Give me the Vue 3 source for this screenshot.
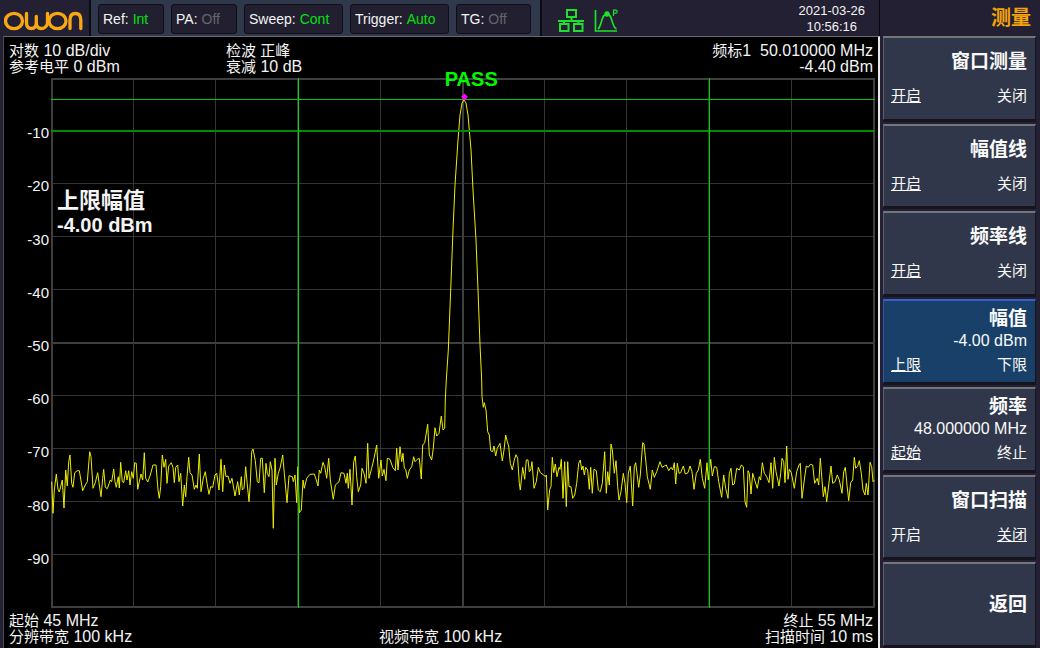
<script setup>
const status = [
  { label: 'Ref:', value: 'Int', on: true, size: 'short' },
  { label: 'PA:', value: 'Off', on: false, size: 'short' },
  { label: 'Sweep:', value: 'Cont', on: true, size: 'long' },
  { label: 'Trigger:', value: 'Auto', on: true, size: 'long' },
  { label: 'TG:', value: 'Off', on: false, size: 'medium' },
]

const menu = [
  { title: '窗口测量', options: ['开启', '关闭'], selected: 0 },
  { title: '幅值线', options: ['开启', '关闭'], selected: 0 },
  { title: '频率线', options: ['开启', '关闭'], selected: 0 },
  { title: '幅值', value: '-4.00 dBm', options: ['上限', '下限'], selected: 0, active: true },
  { title: '频率', value: '48.000000 MHz', options: ['起始', '终止'], selected: 0 },
  { title: '窗口扫描', options: ['开启', '关闭'], selected: 1 },
  { title: '返回' },
]

const levels = [-10, -20, -30, -40, -50, -60, -70, -80, -90]
const columns = [134, 216, 298, 381, 545, 627, 709, 792]
const rows = [131, 184, 237, 290, 396, 449, 502, 555]

// Sweep samples, stored in blocks relative to an origin at three steps per unit.
const sweep = [
  { x: 0, y: 430, data: '155,155 159,250 163,180 169,132 174,178 178,186 187,150 192,234 197,120 202,168 206,95 210,75 215,160 219,172 224,128 232,122 238,122 248,182 256,165 262,155 269,65 273,80 279,175 286,158 293,128 298,165 303,200 308,145 311,118 316,172 322,176 331,150 335,155 341,117 345,155 349,172 355,140 358,174 362,97 367,155 371,158 377,122 381,150 386,122 390,165 395,125 400,145 404,98 409,100 413,178 418,155 423,132 428,150 433,68 437,145 443,156 450,138 459,105 468,105 474,180 478,205 482,170 487,75 492,112 497,88 501,160 506,108 514,98 519,112 523,158 527,112 533,105 537,155 542,130 548,228 553,165 557,200 561,140 566,82 570,128 576,135 583,178 588,165 592,175 598,72 603,185 610,145 616,125 622,165 627,193 632,170 638,172 645,135 650,130 657,180 663,88 668,185 673,105 678,140 684,138 690,160' },
  { x: 230, y: 430, data: '6,145 15,198 23,155 28,195 34,140 37,180 42,175 47,110 52,165 57,215 61,160 65,65 69,57 76,92 82,155 87,158 92,85 97,85 103,188 108,100 112,130 117,140 121,95 126,120 130,295 135,85 139,165 145,130 150,115 158,75 163,130 171,218 177,137 187,140 190,155 195,135 200,218 204,110 208,248 214,240 219,150 223,175 230,145 240,133 253,132 259,150 264,168 268,120 272,130 279,97 284,110 290,145 296,85 301,150 310,208 316,165 327,155 333,128 342,130 348,160 352,130 355,175 360,118 366,225 371,95 376,78 380,140 385,185 392,165 396,115 402,130 408,160 413,40 417,145 425,115 432,85 440,45 446,145 453,90 457,138 462,118 468,152 472,85 480,88 488,112 496,122 500,55 504,120' },
  { x: 400, y: 380, data: '0,200 5,245 9,220 13,265 17,268 22,295 28,270 35,260 41,230 45,245 52,238 58,235 64,297 68,195 74,188 83,133 88,225 95,240 100,205 105,143 110,168 117,160 124,108 129,150 134,145 136,60 139,0 145,-90 152,-270 159,-450 165,-585 174,-720 180,-795 186,-831 192,-840 198,-831 204,-795 213,-690 219,-570 228,-420 234,-270 240,-105 245,0 246,50 250,82 253,68 258,90 263,155 268,165 272,212 278,215 282,198 287,228 292,205 300,190 307,243 312,210 317,165 322,185 326,198 331,250 337,270 343,240 348,224 353,235 358,310 361,330 368,262 374,298 379,240 384,240 388,275 392,270 396,245 402,325 409,305 415,262 421,278 431,285 436,290 439,285 443,390 449,328 453,320 457,232 461,278 466,252 471,290 477,262 480,268 484,238 489,355 494,245 499,380 503,245 507,320 513,320 518,355 524,345 530,310 536,250 541,240 545,270 549,258 553,285 557,262 563,270 568,328 572,262 577,340 582,268 589,272 595,330' },
  { x: 560, y: 430, data: '121,185 127,160 134,65 139,190 143,125 148,165 153,42 157,60 163,130 168,92 173,170 177,210 183,185 190,130 195,160 200,218 205,130 211,108 218,228 223,110 227,98 236,172 241,135 248,38 252,42 257,90 262,140 271,178 277,120 283,142 290,125 300,95 306,112 313,108 319,105 326,122 333,112 338,120 343,98 347,162 352,100 357,130 362,128 370,108 376,132 384,128 390,108 396,125 402,178 409,130 415,120 421,88 427,145 434,175 441,98 445,150 452,88 457,138 463,110 470,112 476,155 485,202 491,135 497,175 504,205' },
  { x: 700, y: 430, data: '88,130 93,115 98,165 103,162 110,115 118,120 124,105 130,110 135,215 140,232 144,122 148,130 153,192 158,130 164,150 172,175 178,140 182,150 187,98 193,130 200,140 207,158 213,98 218,175 223,82 228,125 237,168 242,130 246,85 251,95 255,158 260,48 264,148 268,118 274,128 283,175 290,125 297,105 301,100 306,205 313,150 319,108 325,112 331,103 338,105 344,160 352,145 356,165 361,85 366,150 370,200 375,170 380,215 386,165 393,108 398,160 405,155 412,135 418,150 426,190 431,125 436,112 441,165 446,212 452,158 458,150 463,82 467,115 473,108 478,92 484,130 489,180 495,195 499,160 504,195 510,97 515,110 519,155 523,150' },
]

const trace = sweep
  .flatMap(({ x, y, data }) =>
    data.split(' ').map((pair) => {
      const [px, py] = pair.split(',').map(Number)
      return `${(x + px / 3).toFixed(1)},${(y + py / 3).toFixed(1)}`
    })
  )
  .join(' ')
</script>

<template>
  <div class="analyzer">
    <header class="topbar">
      <div class="brand">
        <svg width="82" height="22" viewBox="0 0 82 22" role="img" aria-label="owon">
          <g fill="none" stroke="#f9a814" stroke-width="3.300" stroke-linecap="round" stroke-linejoin="round">
            <ellipse cx="10" cy="12" rx="8.500" ry="7.700" />
            <path d="M22.500 4.500v9c0 3.800 1.800 6 4.800 6s5-2.200 5-6v-6v6c0 3.800 2 6 5 6s5.200-2 6.200-5" />
            <path d="M43.500 14V4.500" />
            <ellipse cx="53.500" cy="12" rx="8.500" ry="7.700" />
            <path d="M66 19.500v-8.500c0-4 2-6.500 5.500-6.500s5.300 2.500 5.300 6.500v8.500" />
          </g>
        </svg>
      </div>
      <div class="status">
        <div v-for="s in status" :key="s.label" class="chip" :class="s.size">
          <span>{{ s.label }}</span><span :class="s.on ? 'on' : 'off'">{{ s.value }}</span>
        </div>
      </div>
      <div class="system">
        <svg width="26" height="24" viewBox="0 0 26 24" aria-hidden="true">
          <g fill="none" stroke="#1fe02c" stroke-width="2">
            <path d="M9 1h9v7H9zM2 15h8.500v7H2zM16 15h8.500v7H16zM13.500 8v4M0 12h26M6 12v3M20.500 12v3" />
          </g>
        </svg>
        <svg width="24" height="24" viewBox="0 0 24 24" aria-hidden="true">
          <g fill="none" stroke="#1fe02c" stroke-width="1.700">
            <path d="M1.500 1v21H23M4 20c4-3 3-15 9-15S17 17.500 22.500 20" />
            <path d="M19.500 7V1.200h2.200c2 0 2 3 0 3h-2.200" stroke-width="1.200" />
          </g>
          <circle cx="13" cy="5" r="2.700" fill="#1fe02c" />
        </svg>
        <time class="clock" datetime="2021-03-26T10:56:16">2021-03-26<br />10:56:16</time>
      </div>
      <h1 class="heading">测量</h1>
    </header>

    <main class="screen">
      <div class="info top">
        <p><span class="zh">对数</span> 10 dB/div<br /><span class="zh">参考电平</span> 0 dBm</p>
        <p><span class="zh">检波 正峰</span><br /><span class="zh">衰减</span> 10 dB</p>
        <p class="end"><span class="zh">频标</span>1&nbsp; 50.010000 MHz<br />-4.40 dBm</p>
      </div>
      <div class="chart">
        <div class="scale">
          <span v-for="l in levels" :key="l">{{ l }}</span>
        </div>
        <div class="plot">
          <svg class="graph" viewBox="51 78 824 530" preserveAspectRatio="none" aria-hidden="true">
            <g stroke="#343434" stroke-width="1">
              <line v-for="c in columns" :key="'c' + c" :x1="c - 0.5" :x2="c - 0.5" y1="79" y2="607" />
              <line v-for="r in rows" :key="'r' + r" x1="52" x2="874" :y1="r - 0.5" :y2="r - 0.5" />
            </g>
            <g fill="none" stroke="#3e4040" stroke-width="2">
              <rect x="52" y="79" width="822" height="528" />
              <path d="M463 79V607M52 343H874" />
            </g>
            <polyline :points="trace" fill="none" stroke="#eeee00" stroke-width="1" stroke-linejoin="round" />
            <g>
              <rect x="51" y="99" width="824" height="1" fill="#00c800" />
              <rect x="51" y="130" width="824" height="2" fill="#008c00" />
              <rect x="298" y="78" width="1" height="530" fill="#00e000" />
              <rect x="709" y="78" width="1" height="530" fill="#00d000" />
            </g>
            <path d="M464.500 93.500l3.500 3.500-3.500 3.500-3.500-3.500z" fill="#ff00ff" />
          </svg>
          <strong class="pass">PASS</strong>
          <p class="limit"><span>上限幅值</span><br />-4.00 dBm</p>
        </div>
      </div>
      <div class="info bottom">
        <p><span class="zh">起始</span> 45 MHz<br /><span class="zh">分辨带宽</span> 100 kHz</p>
        <p><br /><span class="zh">视频带宽</span> 100 kHz</p>
        <p class="end"><span class="zh">终止</span> 55 MHz<br /><span class="zh">扫描时间</span> 10 ms</p>
      </div>
    </main>

    <nav class="menu">
      <button v-for="m in menu" :key="m.title" type="button" class="key" :class="{ active: m.active, detailed: m.value, single: !m.options }">
        <span class="title">{{ m.title }}</span>
        <span v-if="m.value" class="value">{{ m.value }}</span>
        <span v-if="m.options" class="options">
          <span v-for="(o, i) in m.options" :key="o" :class="{ chosen: i === m.selected }">{{ o }}</span>
        </span>
      </button>
    </nav>
  </div>
</template>

<style>
body {
  margin: 0;
  background: #232033;
}
</style>

<style scoped>
.analyzer {
  box-sizing: border-box;
  min-height: 100vh;
  display: grid;
  grid-template-columns: minmax(0, 1fr) 160px;
  grid-template-rows: 36px 1fr;
  background: #232033;
  color: #f4f4f4;
  font-family: "Liberation Sans", "Noto Sans CJK SC", sans-serif;
  font-size: 16px;
}

p,
h1 {
  margin: 0;
}

.topbar {
  grid-column: 1 / -1;
  display: grid;
  grid-template-columns: 89px 451px minmax(0, 1fr) 160px;
}

.brand {
  display: flex;
  align-items: center;
  padding-left: 4px;
}

.status {
  display: flex;
  gap: 7px;
  padding: 4px 0 5px 7px;
  background: #30384c;
  border-left: 2px solid #0c0c14;
}

.chip {
  box-sizing: border-box;
  display: flex;
  align-items: center;
  gap: 4px;
  padding: 0 4px 1px;
  background: #222030;
  border: 1px solid #0e0e16;
  border-radius: 3px;
  font-size: 14px;
}

.short {
  width: 66px;
}

.medium {
  width: 75px;
}

.long {
  width: 99px;
}

.on {
  color: #00e010;
}

.off {
  color: #66666a;
}

.system {
  display: flex;
  align-items: center;
  gap: 10px;
  padding: 3px 14px 0 16px;
  border-left: 2px solid #0a0a10;
  border-right: 1px solid #08080c;
}

.clock {
  margin: 0 0 4px auto;
  font-size: 13px;
  line-height: 16px;
  text-align: center;
}

.heading {
  padding: 1px 9px 0 0;
  color: #f5a30a;
  font-size: 20px;
  line-height: 35px;
  text-align: right;
}

.screen {
  display: flex;
  flex-direction: column;
  margin-left: 3px;
  padding-left: 5px;
  background: #000;
  border-top: 1px solid #6a6a6c;
  border-left: 1px solid #4c4c50;
  border-right: 2px solid #e8e8e8;
}

.info {
  display: grid;
  grid-template-columns: 217px minmax(0, 1fr) 200px;
  padding-right: 5px;
  line-height: 16px;
}

.top {
  padding-top: 6px;
  padding-bottom: 3px;
}

.bottom {
  grid-template-columns: 370px minmax(0, 1fr) 200px;
  padding-top: 5px;
  padding-bottom: 3px;
}

.zh {
  font-size: 15px;
}

.end {
  text-align: right;
}

.chart {
  flex: 1;
  display: flex;
  padding-right: 3px;
}

.scale {
  width: 40px;
  margin: 28px 2px 23px 0;
  display: flex;
  flex-direction: column;
  text-align: right;
  font-size: 15px;
}

.scale span {
  flex: 1;
  display: flex;
  align-items: center;
  justify-content: flex-end;
}

.plot {
  position: relative;
  flex: 1;
}

.graph {
  position: absolute;
  inset: 0;
  width: 100%;
  height: 100%;
}

.pass {
  position: absolute;
  top: 1px;
  left: 51%;
  color: #00f800;
  font-size: 20px;
  line-height: 1;
  transform: translate(-50%, -50%);
}

.limit {
  position: absolute;
  top: 111px;
  left: 6px;
  font-size: 20px;
  font-weight: bold;
  line-height: 24px;
}

.limit span {
  font-size: 22px;
}

.menu {
  display: grid;
  grid-auto-rows: 1fr;
  gap: 4px;
  padding: 0 4px 2px 3px;
}

.key {
  display: flex;
  flex-direction: column;
  align-items: stretch;
  padding: 13px 8px 0 7px;
  background: #30374a;
  border: 1px solid #14131c;
  border-top: 2px solid #74767a;
  border-left: 1px solid #5c5f66;
  color: #fafafa;
  font: inherit;
  line-height: 22px;
  text-align: right;
  box-shadow: 0 2px 0 #17151f;
}

.title {
  font-size: 19px;
  font-weight: bold;
}

.options {
  display: flex;
  justify-content: space-between;
  margin-top: 12px;
  font-size: 15px;
}

.chosen {
  text-decoration: underline;
}

.detailed {
  padding-top: 7px;
}

.detailed .options {
  margin-top: 2px;
}

.single {
  justify-content: center;
  padding-top: 0;
}

.active {
  background: #184069;
  border-top-color: #3a5fd0;
  border-left-color: #3054b0;
}
</style>
